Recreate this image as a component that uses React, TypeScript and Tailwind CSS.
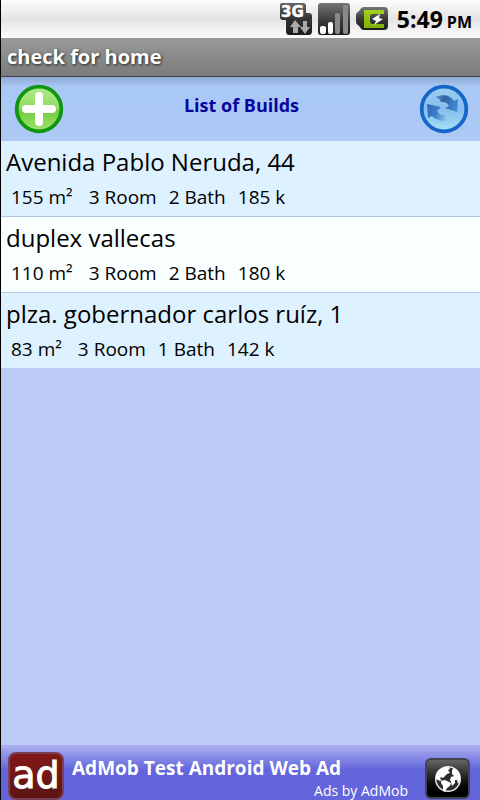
import React from "react";

type Build = { title: string; area: string; rooms: string; baths: string; price: string };

const builds: Build[] = [
  { title: "Avenida Pablo Neruda, 44", area: "155 m²", rooms: "3 Room", baths: "2 Bath", price: "185 k" },
  { title: "duplex vallecas", area: "110 m²", rooms: "3 Room", baths: "2 Bath", price: "180 k" },
  { title: "plza. gobernador carlos ruíz, 1", area: "83 m²", rooms: "3 Room", baths: "1 Bath", price: "142 k" },
];

function NetworkIcon() {
  return (
    <svg width="34" height="34" viewBox="0 0 34 34" aria-label="3G data">
      <defs>
        <linearGradient id="net" x1="0" y1="0" x2="0" y2="1">
          <stop offset="0" stopColor="#666" />
          <stop offset="0.5" stopColor="#333" />
          <stop offset="1" stopColor="#1c1c1c" />
        </linearGradient>
      </defs>
      <path d="M3 1h21q3 0 3 3v7h3q3 0 3 3v15q0 4-3 4H10q-3 0-3-4V18H4q-3 0-3-3V3q0-2 2-2z" fill="url(#net)" />
      <text x="2" y="15" fontSize="15" fontWeight="700" fill="#fff" stroke="#fff" strokeWidth="0.5" fontFamily="'DejaVu Sans', sans-serif">3G</text>
      <path d="M16 18l6 7h-3v6h-5v-6h-3z" fill="#aaa" />
      <path d="M26 32l-5-7h3v-6h4v6h3z" fill="#aaa" />
    </svg>
  );
}

function SignalIcon() {
  return (
    <svg width="34" height="34" viewBox="0 0 34 34" aria-label="Signal strength">
      <defs>
        <linearGradient id="sig" x1="0" y1="0" x2="0" y2="1">
          <stop offset="0" stopColor="#777" />
          <stop offset="0.55" stopColor="#3c3c3c" />
          <stop offset="1" stopColor="#1c1c1c" />
        </linearGradient>
      </defs>
      <rect x="1" y="1" width="32" height="32" rx="3" fill="url(#sig)" />
      <rect x="3" y="24" width="6" height="8" rx="2" fill="#fff" />
      <rect x="11" y="20" width="5" height="12" rx="2" fill="#fff" />
      <rect x="18" y="11" width="5" height="21" rx="2" fill="#8a8a8a" />
      <rect x="26" y="3" width="5" height="29" rx="2" fill="#8a8a8a" />
    </svg>
  );
}

function BatteryIcon() {
  return (
    <svg width="34" height="26" viewBox="0 0 34 26" aria-label="Battery charging">
      <defs>
        <linearGradient id="bat" x1="0" y1="0" x2="0" y2="1">
          <stop offset="0" stopColor="#777" />
          <stop offset="0.5" stopColor="#3a3a3a" />
          <stop offset="1" stopColor="#1c1c1c" />
        </linearGradient>
        <linearGradient id="charge" x1="0" y1="0" x2="0" y2="1">
          <stop offset="0" stopColor="#a4cf1c" />
          <stop offset="1" stopColor="#7fae06" />
        </linearGradient>
      </defs>
      <path d="M9 1h20q4 0 4 4v15q0 4-4 4H9q-3 0-4-3l-2-2q-2-1-2-3v-7q0-2 2-3l2-2q1-3 4-3z" fill="url(#bat)" />
      <path d="M9 4h20v4H18q-3 0-3 3v4q0 3 3 3h11v4H9z" fill="url(#charge)" />
      <path d="M25 8l-8 5 4 2-2 4 9-6-4-1z" fill="#fff" />
    </svg>
  );
}

function AddIcon() {
  return (
    <svg width="50" height="50" viewBox="0 0 50 50" aria-hidden="true">
      <defs>
        <linearGradient id="add" x1="0" y1="0" x2="0" y2="1">
          <stop offset="0" stopColor="#b4ea8c" />
          <stop offset="0.5" stopColor="#8fda60" />
          <stop offset="0.55" stopColor="#72cb40" />
          <stop offset="1" stopColor="#a2e670" />
        </linearGradient>
      </defs>
      <circle cx="25" cy="25" r="22.3" fill="url(#add)" stroke="#109612" strokeWidth="3.8" />
      <path d="M25 12v26M12 25h26" stroke="#fff" strokeWidth="8" strokeLinecap="round" />
    </svg>
  );
}

function RefreshIcon() {
  return (
    <svg width="50" height="50" viewBox="0 0 50 50" aria-hidden="true">
      <defs>
        <linearGradient id="ref" x1="0" y1="0" x2="0" y2="1">
          <stop offset="0" stopColor="#9fcdf2" />
          <stop offset="0.5" stopColor="#86bdec" />
          <stop offset="1" stopColor="#a5e2fa" />
        </linearGradient>
        <linearGradient id="arrowA" x1="0" y1="0" x2="1" y2="0.3">
          <stop offset="0" stopColor="#3a6fb4" stopOpacity="0.5" />
          <stop offset="0.4" stopColor="#33619f" />
          <stop offset="1" stopColor="#3c88d2" />
        </linearGradient>
        <linearGradient id="arrowB" x1="0" y1="0" x2="1" y2="0.3">
          <stop offset="0" stopColor="#2f68b4" />
          <stop offset="0.5" stopColor="#3f7fc6" />
          <stop offset="1" stopColor="#4a88cc" stopOpacity="0.1" />
        </linearGradient>
      </defs>
      <circle cx="25" cy="25" r="22.3" fill="url(#ref)" stroke="#1467c6" strokeWidth="3.8" />
      <path d="M16 13c9-3 15-2 19 4l4-2-1 13-12-4 4-2c-2-4-5-4-8-4-1-3-3-4-6-5z" fill="url(#arrowA)" />
      <path d="M32 37c-9 1-15-1-19-5l-4 2-1-14 14 3-4 4c2 3 4 4 7 4 1 3 4 5 7 6z" fill="url(#arrowB)" />
    </svg>
  );
}

function GlobeIcon() {
  return (
    <svg width="28" height="28" viewBox="0 0 28 28" aria-hidden="true">
      <circle cx="14" cy="14" r="12.3" fill="#2c2c2c" stroke="#eee" strokeWidth="1.4" />
      <path d="M2 10l3-5 5-3 5 0 1 2-2 1 2 3-3 1-2 2-2 2-2-1-1 2 2 1-2 1-4-2z" fill="#fff" />
      <path d="M7 16l4-1 6 3-1 3-3 2-2 4-2-1 0-5-2-3z" fill="#fff" />
      <path d="M18 5l2-2 3 2 3 5 0 5-2 4-1-4-2 0 0 3-3 3-1-4-1-2 1-3 3-1-2-2z" fill="#fff" />
    </svg>
  );
}

export default function App() {
  return (
    <div className="flex min-h-screen flex-col border-l border-black bg-[#bccbf6] font-['Open_Sans','Noto_Sans',sans-serif] text-black">
      <div className="flex h-[38px] items-center justify-end bg-linear-to-b from-[#fdfdfd] via-[#e4e4e4] to-[#fbfbfb] pr-2">
        <div className="flex items-center gap-1">
          <NetworkIcon />
          <SignalIcon />
          <BatteryIcon />
        </div>
        <div className="ml-2 flex items-baseline gap-1 font-bold">
          <span className="text-[23px] leading-8">5:49</span>
          <span className="text-base">PM</span>
        </div>
      </div>

      <h1 className="flex h-[39px] items-center border-b border-[#3c4354] bg-linear-to-b from-[#9a9a9a] to-[#7b7b7b] px-1.5 text-[20px] font-bold text-white [text-shadow:1px_1px_3px_#222]">
        check for home
      </h1>

      <header className="flex h-16 items-center justify-between bg-linear-to-b from-[#8ea8d2] via-[#aac8f5] via-15% to-[#adcaf7] pr-[11px] pl-[13px]">
        <button type="button" aria-label="Add build">
          <AddIcon />
        </button>
        <h2 className="mb-2 text-[18px] font-bold text-[#0505a0]">List of Builds</h2>
        <button type="button" aria-label="Refresh">
          <RefreshIcon />
        </button>
      </header>

      <ul className="divide-y divide-[#b2c6ea]">
        {builds.map((b) => (
          <li key={b.title} className="bg-[#def1ff] px-[5px] pb-px even:bg-[#f9ffff]">
            <div className="pt-[3px] text-[24px] leading-9">{b.title}</div>
            <div className="flex gap-3 pl-[5px] text-[19px] leading-[35px]">
              <span className="mr-1">{b.area}</span>
              <span>{b.rooms}</span>
              <span>{b.baths}</span>
              <span>{b.price}</span>
            </div>
          </li>
        ))}
      </ul>

      <a
        href="#ad"
        className="mt-auto flex h-[55px] items-start overflow-hidden bg-linear-to-b from-[#aeb0ee] via-[#6464dc] via-45% to-[#6464dc] pl-[7px] pr-2.5 text-white"
      >
        <span className="mt-[7px] flex h-12 w-14 shrink-0 items-center justify-center rounded-lg border-2 border-[#7a4058] bg-linear-to-b from-[#841818] to-[#5c1414] pb-0.5 font-['DejaVu_Sans',sans-serif] text-[38px] leading-none [-webkit-text-stroke:1px_white]">
          ad
        </span>
        <span className="ml-2 flex flex-1 flex-col pt-2.5">
          <span className="text-[19px] font-bold leading-[26px]">AdMob Test Android Web Ad</span>
          <span className="pr-[17px] text-right text-[14px] leading-5">Ads by AdMob</span>
        </span>
        <span className="mt-[13px] flex h-[41px] w-[45px] shrink-0 items-center justify-center rounded-md border-2 border-[#44444c] bg-linear-to-b from-[#666] via-[#111] via-60% to-black">
          <GlobeIcon />
        </span>
      </a>
    </div>
  );
}
